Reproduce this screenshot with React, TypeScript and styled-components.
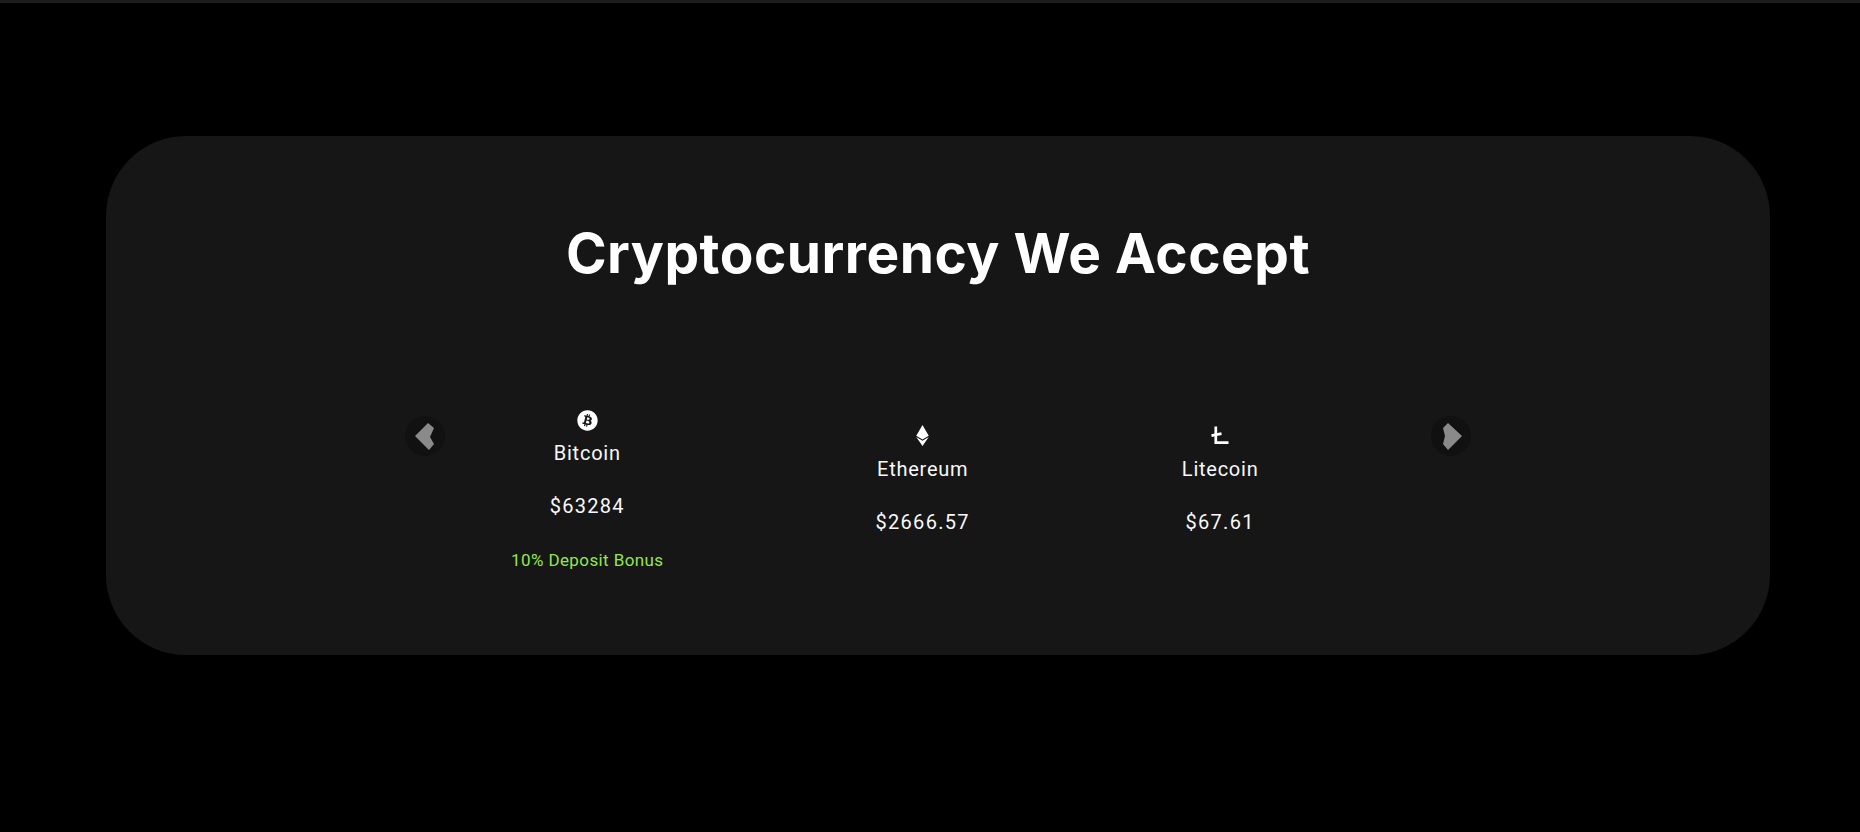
// Crypto payment section with a small coin carousel
import styled, { createGlobalStyle } from "styled-components";
import { FaBitcoin, FaEthereum } from "react-icons/fa";

const GlobalStyle = createGlobalStyle`
  html, body {
    margin: 0;
    background: #000;
  }
`;

const Page = styled.div`
  width: 1860px;
  height: 832px;
  overflow: hidden;
  background: #000;
  border-top: 3px solid #1c1c1c;
  box-sizing: border-box;
  padding: 133px 90px 0 106px;
  font-family: "Roboto", "Liberation Sans", sans-serif;
`;

const Panel = styled.section`
  height: 519px;
  box-sizing: border-box;
  padding-top: 82px;
  background: #161616;
  border-radius: 80px;
`;

const Title = styled.h2`
  margin: 0 0 121px;
  text-align: center;
  font-family: "Inter", "Roboto", sans-serif;
  font-size: 55px;
  line-height: 70px;
  font-weight: 700;
  letter-spacing: 0.5px;
  color: #fff;
`;

const Carousel = styled.div`
  display: flex;
  align-items: flex-start;
  width: 1066px;
  margin: 0 auto;
`;

const Track = styled.div`
  flex: 1;
  display: flex;
  align-items: center;
  gap: 212px;
  padding-left: 66px;
`;

// arrows sit level with the shorter coins, not the middle of the row
const Arrow = styled.button`
  width: 40px;
  height: 40px;
  flex: none;
  margin-top: 7px;
  padding: 0;
  border: 0;
  border-radius: 50%;
  background: #111;
  display: flex;
  align-items: center;
  justify-content: center;
`;

const Coin = styled.div<{ $hasBonus: boolean }>`
  display: flex;
  flex-direction: column;
  align-items: center;
  padding-bottom: ${(p) => (p.$hasBonus ? 0 : 23)}px;
  color: #fff;
`;

const IconBox = styled.div`
  height: 22px;
  font-size: 21px;
  line-height: 22px;
  display: flex;
  align-items: center;
  justify-content: center;
`;

const Name = styled.div`
  margin-top: 6px;
  font-size: 20px;
  line-height: 32px;
  letter-spacing: 0.75px;
  color: #f8f8f8;
`;

const Price = styled.div`
  margin-top: 21px;
  font-size: 20px;
  line-height: 32px;
  letter-spacing: 1.3px;
  color: #f8f8f8;
`;

const Bonus = styled.div`
  margin-top: 22px;
  font-size: 17px;
  line-height: 32px;
  letter-spacing: 0.4px;
  color: #95e64a;
`;

const coins = [
  { name: "Bitcoin", price: "$63284", icon: <FaBitcoin />, bonus: "10% Deposit Bonus" },
  { name: "Ethereum", price: "$2666.57", icon: <FaEthereum /> },
  {
    name: "Litecoin",
    price: "$67.61",
    icon: (
      <svg width="18" height="19" viewBox="0 0 18 19" fill="none" stroke="#fff" strokeWidth="2.7">
        <path d="M4.8 0.5V16.6H17.5" />
        <path d="M0.5 9.6L10.5 7.6" />
      </svg>
    ),
  },
];

function App() {
  return (
    <Page>
      <GlobalStyle />
      <Panel>
        <Title>Cryptocurrency We Accept</Title>
        <Carousel>
          <Arrow aria-label="Previous">
            <svg width="40" height="40" viewBox="0 0 40 40">
              <path d="M10 20L23 7L29 12L25 21L29 28L24 34Z" fill="#8a8a8a" />
            </svg>
          </Arrow>
          <Track>
            {coins.map((coin) => (
              <Coin key={coin.name} $hasBonus={Boolean(coin.bonus)}>
                <IconBox>{coin.icon}</IconBox>
                <Name>{coin.name}</Name>
                <Price>{coin.price}</Price>
                {coin.bonus && <Bonus>{coin.bonus}</Bonus>}
              </Coin>
            ))}
          </Track>
          <Arrow aria-label="Next">
            <svg width="40" height="40" viewBox="0 0 40 40">
              <path d="M31 20L17 7L12 12L14 20L12 28L17 34Z" fill="#8a8a8a" />
            </svg>
          </Arrow>
        </Carousel>
      </Panel>
    </Page>
  );
}

export default App;
